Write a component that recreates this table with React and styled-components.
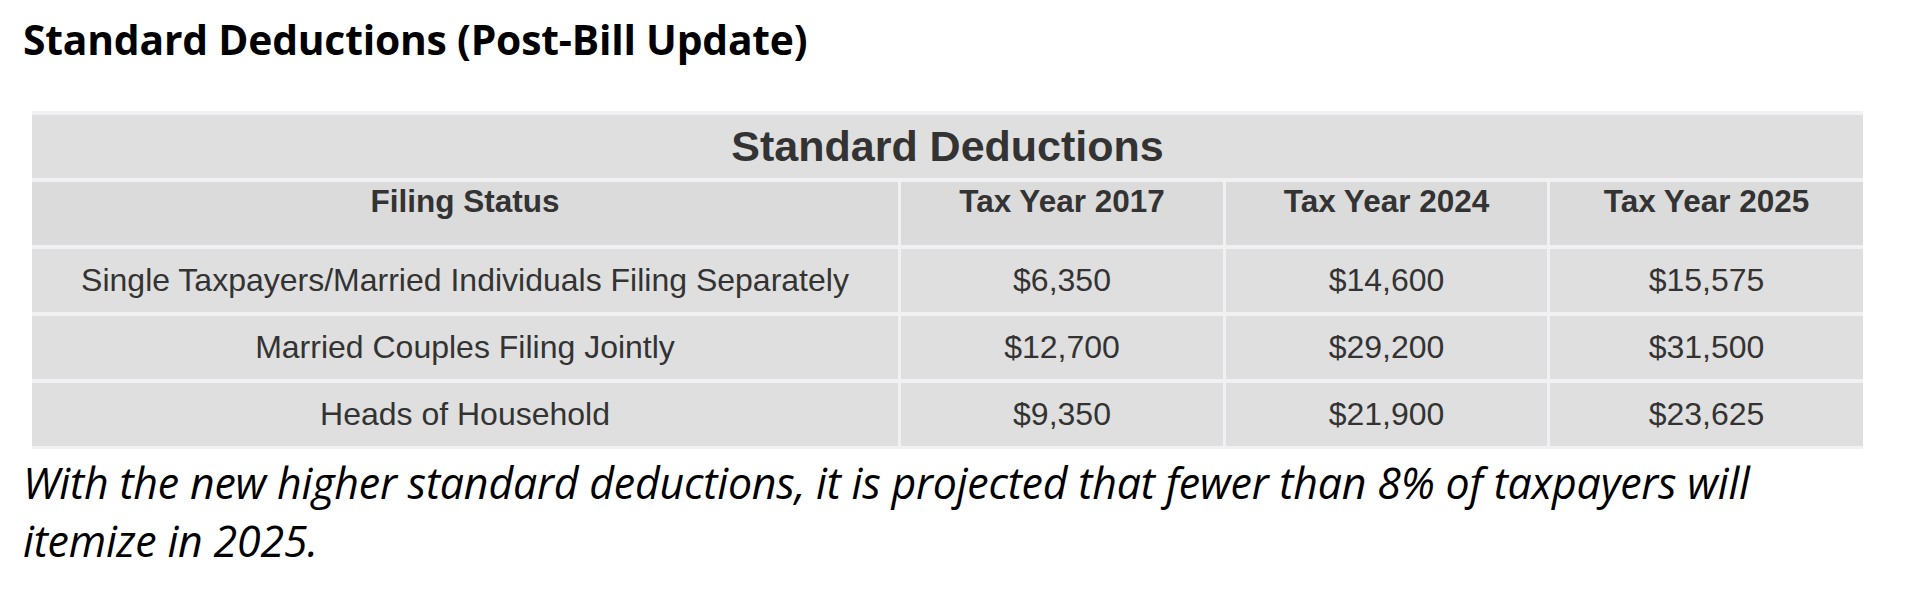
import React from "react";
import styled, { createGlobalStyle } from "styled-components";

const GlobalStyle = createGlobalStyle`
  body {
    margin: 0;
    background: #ffffff;
  }
`;

const Page = styled.div`
  padding: 13px 0 0 23px;
  width: 1860px;
  font-family: "Open Sans", Roboto, sans-serif;
  color: #000;
`;

const Heading = styled.h2`
  margin: 0;
  font-size: 40.8px;
  font-weight: 700;
  line-height: 52px;
  letter-spacing: -0.2px;
`;

const Grid = styled.div`
  margin: 46px 0 0 9px;
  display: grid;
  grid-template-columns: 866px 322px 321px 313px;
  grid-auto-rows: 63px;
  column-gap: 3px;
  row-gap: 4px;
  padding: 4px 0 3px;
  background: #f1f1f3;
  width: 1831px;
  font-family: "Liberation Sans", Arial, sans-serif;
  color: #333;
`;

const Title = styled.div`
  grid-column: 1 / -1;
  display: flex;
  align-items: center;
  justify-content: center;
  background: #dfdfdf;
  font-size: 43px;
  font-weight: 700;
`;

const Cell = styled.div`
  display: flex;
  justify-content: center;
  align-items: ${(p) => (p.$head ? "flex-start" : "center")};
  padding-top: ${(p) => (p.$head ? "1px" : "0")};
  background: ${(p) => (p.$head ? "#dbdbdb" : "#dfdfdf")};
  font-size: ${(p) => (p.$head ? "31.5px" : "32px")};
  font-weight: ${(p) => (p.$head ? 700 : 400)};
  white-space: nowrap;
`;

const Note = styled.p`
  margin: 5px 0 0;
  width: 1820px;
  font-style: italic;
  font-size: 42.9px;
  line-height: 58px;
  letter-spacing: -0.2px;
`;

const headers = ["Filing Status", "Tax Year 2017", "Tax Year 2024", "Tax Year 2025"];

const rows = [
  ["Single Taxpayers/Married Individuals Filing Separately", "$6,350", "$14,600", "$15,575"],
  ["Married Couples Filing Jointly", "$12,700", "$29,200", "$31,500"],
  ["Heads of Household", "$9,350", "$21,900", "$23,625"],
];

export default function App() {
  return (
    <>
      <GlobalStyle />
      <Page>
        <Heading>Standard Deductions (Post-Bill Update)</Heading>
        <Grid>
          <Title>Standard Deductions</Title>
          {headers.map((h) => (
            <Cell $head key={h}>
              {h}
            </Cell>
          ))}
          {rows.map((r) =>
            r.map((c, i) => <Cell key={r[0] + i}>{c}</Cell>)
          )}
        </Grid>
        <Note>
          With the new higher standard deductions, it is projected that fewer than 8% of taxpayers will
          itemize in 2025.
        </Note>
      </Page>
    </>
  );
}
